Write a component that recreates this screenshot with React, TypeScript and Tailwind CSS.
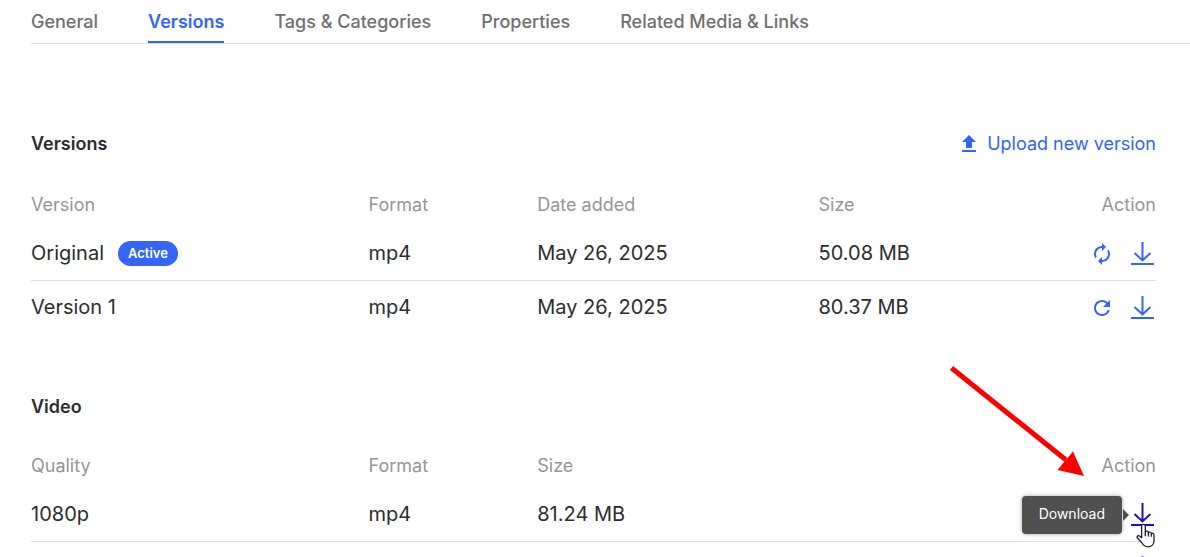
import type { ReactNode } from 'react';
import clsx from 'clsx';
import { MdAutorenew, MdFileUpload, MdRefresh } from 'react-icons/md';

const tabs = ['General', 'Versions', 'Tags & Categories', 'Properties', 'Related Media & Links'];

const versions = [
  { name: 'Original', active: true, format: 'mp4', date: 'May 26, 2025', size: '50.08 MB' },
  { name: 'Version 1', active: false, format: 'mp4', date: 'May 26, 2025', size: '80.37 MB' },
];

function DownloadIcon() {
  return (
    <svg viewBox="0 0 24 24" className="size-6" fill="none" stroke="currentColor" strokeWidth="2" aria-hidden="true">
      <path d="M12.5 0V18.5M4.5 11l8 7.5 8-7.5" />
      <path d="M1 22H24" />
    </svg>
  );
}

function HandCursor() {
  return (
    <svg viewBox="0 0 20 26" className="pointer-events-none absolute top-5 left-1.5 z-10 h-[26px] w-5" aria-hidden="true">
      <path
        d="M5.6 14.8V3.2c0-2.4 3.7-2.4 3.7 0v5.6c.5-1 2.9-.8 3.1.7.7-.8 2.6-.5 2.9.9.9-.7 2.7-.1 2.7 1.6v5.2c0 4-2.4 6.6-6 6.6-3.3 0-4.6-1.3-6-3.8L1.3 14.8c-.8-1.7 1.1-2.9 2.5-1.6z"
        fill="#fff"
        stroke="#20202c"
        strokeWidth="1.3"
        strokeLinejoin="round"
      />
      <path d="M9.3 8.6v4.6M12.4 9.4v4M15.3 10.4v3.4" stroke="#20202c" strokeWidth="1.3" fill="none" />
    </svg>
  );
}

// Red pointer drawn over the page, leading to the download button
function Pointer() {
  return (
    <svg viewBox="0 0 136 112" className="pointer-events-none absolute right-[69px] bottom-[50px] h-28 w-[136px] max-w-none" aria-hidden="true">
      <path d="M2.5 3L117 95" stroke="#ff0000" strokeWidth="5" />
      <path d="M135 111L108.500 105L124 86.500Z" fill="#ff0000" />
    </svg>
  );
}

function Tooltip({ children }: { children: ReactNode }) {
  return (
    <span role="tooltip" className="absolute top-1/2 right-full mr-2 -translate-y-1/2 rounded bg-[#505050] px-[17px] pt-[7px] pb-[9px] text-sm leading-[22px] text-white shadow-[0_0_4px_rgba(0,0,0,0.35)]">
      {children}
      <svg viewBox="0 0 6 12" className="absolute top-1/2 -right-[7px] h-3 w-1.5 -translate-y-1/2" aria-hidden="true">
        <path d="M0 0L6 6L0 12Z" fill="#505050" />
      </svg>
    </span>
  );
}

function Th({ children, right }: { children: ReactNode; right?: boolean }) {
  return (
    <th scope="col" className={clsx('h-[45px] p-0 text-lg font-normal text-[#969696]', right ? 'text-right' : 'text-left')}>
      {children}
    </th>
  );
}

export default function App() {
  return (
    <div className="h-screen overflow-hidden bg-white pl-[31px] font-['Inter','Liberation_Sans',sans-serif] text-[#2d2d2d]">
      <nav className="flex gap-[50px] border-b border-[#dedede]">
        {tabs.map((tab) => (
          <a
            key={tab}
            href="#"
            className={clsx(
              'pt-2 text-lg leading-[27px]',
              tab === 'Versions' ? 'border-b-2 border-[#3366f6] pb-1.5 font-semibold text-[#3366f6]' : 'pb-2 font-medium text-[#707070]',
            )}
          >
            {tab}
          </a>
        ))}
      </nav>

      <main className="pr-[34px]">
        <section className="pt-[88px]">
          <div className="mb-[26px] flex items-center justify-between">
            <h2 className="text-lg leading-6 font-semibold">Versions</h2>
            <button type="button" className="flex items-center gap-1.5 text-lg leading-6 text-[#3366f6]">
              <MdFileUpload className="size-6" />
              Upload new version
            </button>
          </div>
          <table className="w-full table-fixed border-collapse text-xl">
            <colgroup>
              <col className="w-[30%]" />
              <col className="w-[15%]" />
              <col className="w-[25%]" />
              <col className="w-[30%]" />
            </colgroup>
            <thead>
              <tr>
                <Th>Version</Th>
                <Th>Format</Th>
                <Th>Date added</Th>
                <Th>
                  <span className="flex justify-between">
                    <span>Size</span>
                    <span>Action</span>
                  </span>
                </Th>
              </tr>
            </thead>
            <tbody>
              {versions.map((v) => (
                <tr key={v.name} className="h-[53px] border-b border-[#dedede] last:border-b-0">
                  <td className="p-0">
                    <span className="flex items-center gap-3.5">
                      {v.name}
                      {v.active && (
                        <span className="rounded-full bg-[#3366f6] px-2.5 text-[13px] leading-[25px] font-semibold text-white">Active</span>
                      )}
                    </span>
                  </td>
                  <td className="p-0">{v.format}</td>
                  <td className="p-0">{v.date}</td>
                  <td className="p-0">
                    <div className="flex items-center justify-between pr-0.5">
                      {v.size}
                      <span className="flex gap-4 pt-0.5 text-[#3366f6]">
                        <button type="button" aria-label={v.active ? 'Replace' : 'Restore'}>
                          {v.active ? <MdAutorenew className="size-6" /> : <MdRefresh className="size-6" />}
                        </button>
                        <button type="button" aria-label="Download">
                          <DownloadIcon />
                        </button>
                      </span>
                    </div>
                  </td>
                </tr>
              ))}
            </tbody>
          </table>
        </section>

        <section className="pt-[62px]">
          <h2 className="mb-6 text-lg leading-6 font-semibold">Video</h2>
          <table className="w-full table-fixed border-collapse text-xl">
            <colgroup>
              <col className="w-[30%]" />
              <col className="w-[15%]" />
              <col className="w-[25%]" />
              <col className="w-[30%]" />
            </colgroup>
            <thead>
              <tr>
                <Th>Quality</Th>
                <Th>Format</Th>
                <Th>Size</Th>
                <Th right>Action</Th>
              </tr>
            </thead>
            <tbody>
              <tr className="h-[53px] border-b border-[#dedede]">
                <td className="p-0">1080p</td>
                <td className="p-0">mp4</td>
                <td className="p-0">81.24 MB</td>
                <td className="p-0">
                  <div className="flex justify-end pt-0.5 pr-0.5">
                    <div className="relative">
                      <button type="button" aria-label="Download" className="block text-[#2a0fb4]">
                        <DownloadIcon />
                      </button>
                      <Tooltip>Download</Tooltip>
                      <Pointer />
                      <HandCursor />
                    </div>
                  </div>
                </td>
              </tr>
              <tr className="h-[53px]">
                <td className="p-0" colSpan={4}>
                  <div className="flex justify-end pr-0.5">
                    <button type="button" aria-label="Download" className="block text-[#3366f6]">
                      <DownloadIcon />
                    </button>
                  </div>
                </td>
              </tr>
            </tbody>
          </table>
        </section>
      </main>
    </div>
  );
}
